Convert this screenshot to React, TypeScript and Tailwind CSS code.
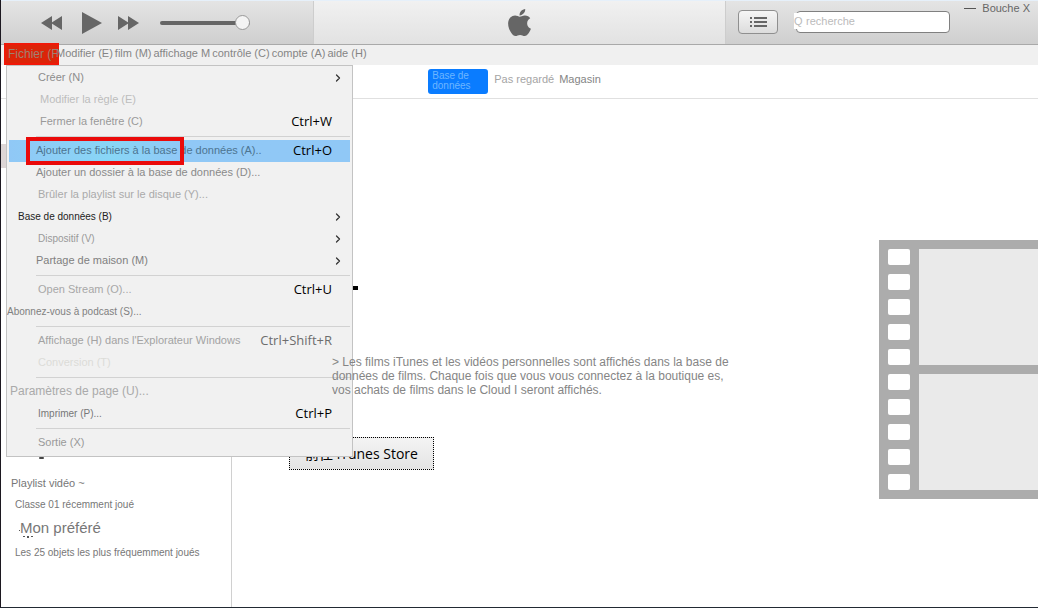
import { ChevronRight } from "lucide-react";
import { FaApple } from "react-icons/fa";
import clsx from "clsx";

type Entry = {
  label: string;
  keys?: string;
  sub?: boolean;
  active?: boolean;
  className: string;
};

const groups: Entry[][] = [
  [
    { label: "Créer (N)", sub: true, className: "pl-[31px] text-[11px] text-[#8c8c8c]" },
    { label: "Modifier la règle (E)", className: "pl-[33px] text-[11px] text-[#bdbdbd]" },
    { label: "Fermer la fenêtre (C)", keys: "Ctrl+W", className: "pl-[33px] text-[11px] text-[#999]" },
  ],
  [
    {
      label: "Ajouter des fichiers à la base de données (A)..",
      keys: "Ctrl+O",
      active: true,
      className: "pl-[29px] text-[11px] text-[#4d7490]",
    },
    { label: "Ajouter un dossier à la base de données (D)...", className: "pl-[29px] text-[11px] text-[#8a8a8a]" },
    { label: "Brûler la playlist sur le disque (Y)...", className: "pl-[31px] text-[11px] text-[#aaa]" },
    { label: "Base de données (B)", sub: true, className: "pl-[11px] text-[10px] text-[#222]" },
    { label: "Dispositif (V)", sub: true, className: "pl-[31px] text-[10px] text-[#999]" },
    { label: "Partage de maison (M)", sub: true, className: "pl-[29px] text-[11px] text-[#808080]" },
  ],
  [
    { label: "Open Stream (O)...", keys: "Ctrl+U", className: "pl-[31px] text-[11px] text-[#a8a8a8]" },
    { label: "Abonnez-vous à podcast (S)...", className: "text-[10px] text-[#808080]" },
  ],
  [
    {
      label: "Affichage (H) dans l'Explorateur Windows",
      keys: "Ctrl+Shift+R",
      className: "pl-[31px] text-[11px] text-[#a3a3a3]",
    },
    { label: "Conversion (T)", className: "pl-[31px] text-[11px] text-[#dcdcd8]" },
  ],
  [
    { label: "Paramètres de page (U)...", className: "pl-[3px] text-[12px] text-[#aaa]" },
    { label: "Imprimer (P)...", keys: "Ctrl+P", className: "pl-[31px] text-[10px] text-[#777]" },
  ],
  [{ label: "Sortie (X)", className: "pl-[31px] text-[11px] text-[#999]" }],
];

const menus = ["Modifier (E)", "film (M)", "affichage M", "contrôle (C)", "compte (A)", "aide (H)"];

const MenuRow = ({ item }: { item: Entry }) => (
  <li
    className={clsx(
      "relative mx-[2px] h-[22px]",
      item.active && "bg-linear-to-r from-[#90c8f6] via-[#88d6f6] via-30% to-[#90c8f6] to-50%"
    )}
  >
    <button
      className={clsx(
        "-mx-[2px] flex h-full w-[calc(100%+4px)] items-center justify-between whitespace-nowrap pr-5 text-left",
        item.className
      )}
    >
      <span className="pb-[2px]">{item.label}</span>
      {item.keys && (
        <kbd
          className={clsx(
            "font-['Open_Sans',sans-serif] text-[13px]",
            item.keys === "Ctrl+Shift+R" ? "text-[#6d6d6d]" : "text-black"
          )}
        >
          {item.keys}
        </kbd>
      )}
      {item.sub && <ChevronRight className="-mr-3 h-3 w-3 text-[#333]" strokeWidth={2.5} />}
    </button>
    {item.active && (
      <span className="pointer-events-none absolute -top-[3px] left-[17px] h-[28px] w-[158px] border-4 border-[#ea0a0a]" />
    )}
  </li>
);

const FileMenu = () => (
  <div className="absolute top-full left-[5px] z-10 w-[347px] border border-[#c3c3c3] bg-[#f1f1f1] pt-px pb-[2px]">
    {groups.map((group, i) => (
      <ul key={i}>
        {i > 0 && (
          <li className="flex h-[7px] items-center pr-[2px] pl-[29px]">
            <hr className="w-full border-[#d2d2d2]" />
          </li>
        )}
        {group.map((item) => (
          <MenuRow key={item.label} item={item} />
        ))}
      </ul>
    ))}
  </div>
);

const Header = () => (
  <header className="flex h-[45px] border-t border-b border-t-[#e6f0fa] border-b-[#a9a9a9] text-[#666]">
    <div className="flex w-[313px] items-center border-r border-[#cdcdcd] bg-linear-to-b from-[#e4e4e4] to-[#cfcfcf] pl-10">
      <button aria-label="Précédent">
        <svg width="21" height="14" viewBox="0 0 21 14" fill="currentColor">
          <path d="M0 7 11 0v14zM10 7l11-7v14z" />
        </svg>
      </button>
      <button aria-label="Lecture" className="ml-5">
        <svg width="20" height="22" viewBox="0 0 20 22" fill="currentColor">
          <path d="M0 0 20 11 0 22z" />
        </svg>
      </button>
      <button aria-label="Suivant" className="ml-4">
        <svg width="21" height="14" viewBox="0 0 21 14" fill="currentColor">
          <path d="M0 0 11 7 0 14zM10 0l11 7-11 7z" />
        </svg>
      </button>
      <input
        type="range"
        aria-label="Volume"
        defaultValue={100}
        className="ml-[21px] h-1 w-[90px] appearance-none rounded-full bg-[#666] [&::-webkit-slider-thumb]:h-[15px] [&::-webkit-slider-thumb]:w-[15px] [&::-webkit-slider-thumb]:appearance-none [&::-webkit-slider-thumb]:rounded-full [&::-webkit-slider-thumb]:border [&::-webkit-slider-thumb]:border-[#999] [&::-webkit-slider-thumb]:bg-[#f4f4f4]"
      />
    </div>
    <div className="flex flex-1 items-center justify-center bg-linear-to-b from-[#f1f1f1] to-[#e2e2e2]">
      <FaApple className="h-[31px] w-[31px]" />
    </div>
    <div className="flex w-[313px] items-center border-l border-[#cdcdcd] bg-linear-to-b from-[#e4e4e4] to-[#cfcfcf] pl-3">
      <button
        aria-label="Liste"
        className="mb-[2px] flex h-6 w-10 items-center justify-center rounded-sm border border-[#8f8f8f] bg-linear-to-b from-[#f6f6f6] to-[#dcdcdc]"
      >
        <svg width="17" height="10" viewBox="0 0 17 10" fill="currentColor">
          <path d="M0 0h2v2H0zM4 0h13v2H4zM0 4h2v2H0zM4 4h13v2H4zM0 8h2v2H0zM4 8h13v2H4z" />
        </svg>
      </button>
      <div className="relative mb-[2px] ml-[18px] text-[11px]">
        <label htmlFor="search" className="absolute top-[2px] -left-[2px] bg-white leading-4 text-[#bbb]">
          Q
        </label>
        <input
          id="search"
          placeholder="recherche"
          className="h-[22px] w-[154px] rounded-sm border border-[#808080] bg-white pb-[2px] pl-[9px] outline-none placeholder:text-[#bbb]"
        />
      </div>
      <div className="ml-auto flex items-center gap-[6px] self-start pr-2 text-[11px] leading-[14px]">
        <button aria-label="Réduire" className="h-px w-3 bg-[#555]" />
        <button className="whitespace-nowrap">Bouche X</button>
      </div>
    </div>
  </header>
);

const FilmStrip = () => (
  <div className="mt-[141px] flex h-[259px] w-[159px] shrink-0 gap-[9px] bg-[#acacac] py-[9px] pl-[9px]">
    <div className="flex flex-col justify-between">
      {Array.from({ length: 10 }, (_, i) => (
        <div key={i} className="h-4 w-[22px] rounded-xs bg-white" />
      ))}
    </div>
    <div className="flex flex-1 flex-col gap-[9px]">
      <div className="flex-1 bg-[#eaeaea]" />
      <div className="flex-1 bg-[#eaeaea]" />
    </div>
  </div>
);

const Sidebar = () => (
  <aside className="w-[231px] shrink-0 border-r border-[#d0d0d0] pt-[45px] text-[#777]">
    <div className="h-6 bg-[#ddd6d6]" />
    <div className="mt-[289px] ml-[38px] h-[2px] w-[5px] rounded-full bg-[#444]" />
    <h2 className="mt-4 pl-[10px] text-[11px] leading-4">Playlist vidéo ~</h2>
    <ul className="pl-[14px]">
      <li className="mt-[6px] text-[10px] leading-4">
        <a href="#recent">Classe 01 récemment joué</a>
      </li>
      <li className="mt-[5px] text-[15px] leading-5">
        <a href="#favoris" className="relative pl-[5px]">
          Mon préféré
          <svg className="absolute bottom-0 left-1 -mb-[2px]" width="14" height="9" viewBox="0 0 14 9" fill="#555">
            <path d="M0 1h1v1H0zM4 7h2v1H4zM8 7h2v2H8zM12 7h2v1h-2z" />
          </svg>
        </a>
      </li>
      <li className="mt-[7px] text-[10px] leading-4">
        <a href="#top25">Les 25 objets les plus fréquemment joués</a>
      </li>
    </ul>
  </aside>
);

export default function App() {
  return (
    <div className="flex min-h-screen flex-col border-b border-l border-b-[#222a33] border-l-[#1c1820] bg-white font-['Liberation_Sans',Arial,sans-serif]">
      <Header />
      <nav className="relative flex h-5 items-center bg-[#f0f0f0] text-[11px] text-[#858585]">
        <button className="-mt-[2px] ml-[3px] h-[22px] w-[55px] overflow-hidden border-2 border-[#f01808] bg-[#dc2408] pl-[2px] text-left text-[12px] leading-[18px] whitespace-nowrap text-[#a08070]">
          Fichier (F
        </button>
        <div className="z-10 -ml-[3px] flex gap-[2px] pb-[3px] whitespace-nowrap">
          {menus.map((menu) => (
            <button key={menu}>{menu}</button>
          ))}
        </div>
        <FileMenu />
      </nav>
      <div className="flex h-[34px] items-center justify-center border-b border-[#e0e0e0] pr-[10px] text-[11px] whitespace-nowrap">
        <button className="h-[25px] w-[60px] rounded-[3px] bg-[#0a7cff] pb-px pl-1 text-left text-[10px] leading-[10px] whitespace-normal text-[#6db6ff]">
          Base de données
        </button>
        <button className="ml-[6px] pb-[5px] text-[#a5a5a5]">Pas regardé</button>
        <button className="ml-[5px] pb-[5px] text-[#858585]">Magasin</button>
      </div>
      <div className="flex flex-1">
        <Sidebar />
        <main className="flex flex-1 justify-between">
          <div className="pt-[187px] pl-[57px]">
            <div className="h-1 w-[69px] bg-black" />
            <p className="relative z-20 mt-[65px] ml-[43px] max-w-[410px] text-[12px] leading-[14px] text-[#858585]">
              &gt; Les films iTunes et les vidéos personnelles sont affichés dans la base de données de films. Chaque
              fois que vous vous connectez à la boutique es, vos achats de films dans le Cloud I seront affichés.
            </p>
            <button className="mt-10 h-[33px] w-[145px] border border-dotted border-black bg-linear-to-b from-[#f4f4f4] to-[#e4e4e4] font-['Open_Sans','Noto_Sans_CJK_SC',sans-serif] text-[14px] whitespace-nowrap text-black">
              前往 iTunes Store
            </button>
          </div>
          <FilmStrip />
        </main>
      </div>
    </div>
  );
}
